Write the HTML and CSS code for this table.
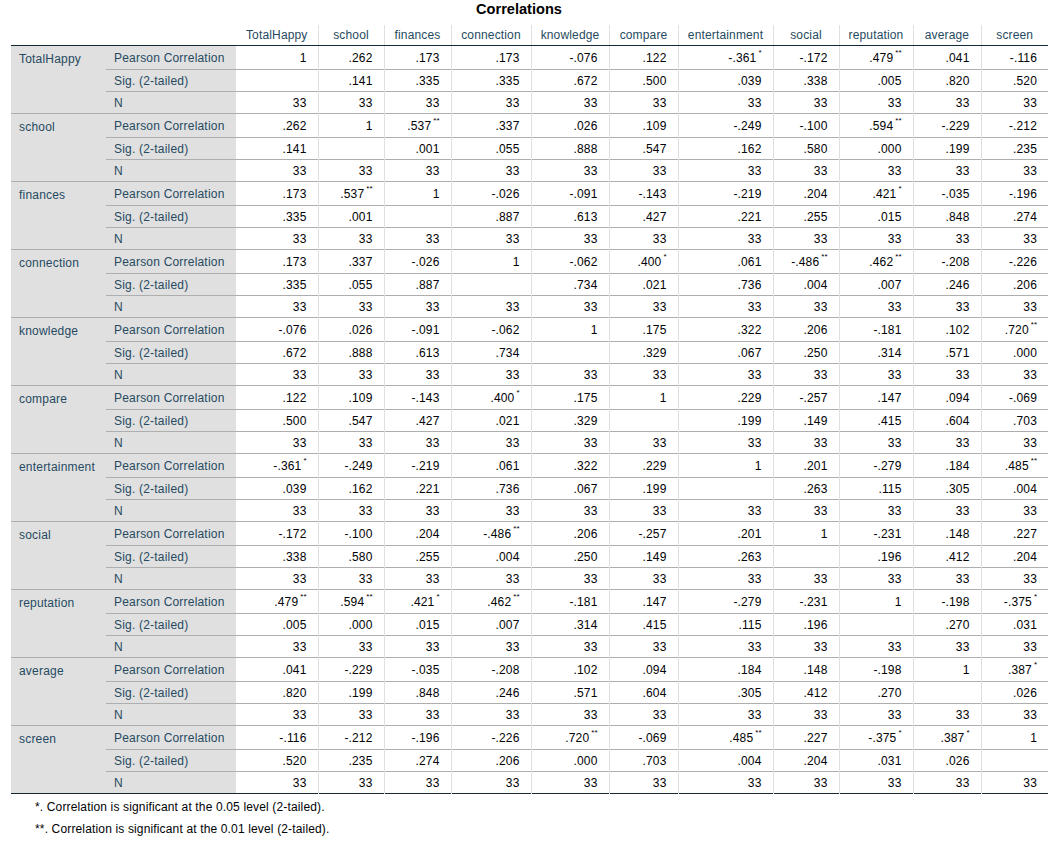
FILE: index.html
```html
<!DOCTYPE html>
<html lang="en">
<head>
<meta charset="utf-8">
<title>Correlations</title>
<link rel="stylesheet" href="styles.css">
</head>
<body>
<div class="page">
<table class="corr">
<caption class="title">Correlations</caption>
<colgroup>
<col class="c-var"><col class="c-stat">
<col style="width:82px"><col style="width:66px"><col style="width:67px"><col style="width:80px"><col style="width:78px"><col style="width:69px"><col style="width:95px"><col style="width:66px"><col style="width:74px"><col style="width:68px"><col style="width:67px">
</colgroup>
<thead>
<tr><th class="corner" colspan="2"></th><th class="first">TotalHappy</th><th>school</th><th>finances</th><th>connection</th><th>knowledge</th><th>compare</th><th>entertainment</th><th>social</th><th>reputation</th><th>average</th><th>screen</th></tr>
</thead>
<tbody>
<tr class="r-p"><th class="var" rowspan="3">TotalHappy</th><th class="stat">Pearson Correlation</th><td class="first">1</td><td>.262</td><td>.173</td><td>.173</td><td>-.076</td><td>.122</td><td>-.361<sup>*</sup></td><td>-.172</td><td>.479<sup>**</sup></td><td>.041</td><td>-.116</td></tr>
<tr class="r-s"><th class="stat">Sig. (2-tailed)</th><td class="first"></td><td>.141</td><td>.335</td><td>.335</td><td>.672</td><td>.500</td><td>.039</td><td>.338</td><td>.005</td><td>.820</td><td>.520</td></tr>
<tr class="r-n"><th class="stat">N</th><td class="first">33</td><td>33</td><td>33</td><td>33</td><td>33</td><td>33</td><td>33</td><td>33</td><td>33</td><td>33</td><td>33</td></tr>

<tr class="r-p"><th class="var" rowspan="3">school</th><th class="stat">Pearson Correlation</th><td class="first">.262</td><td>1</td><td>.537<sup>**</sup></td><td>.337</td><td>.026</td><td>.109</td><td>-.249</td><td>-.100</td><td>.594<sup>**</sup></td><td>-.229</td><td>-.212</td></tr>
<tr class="r-s"><th class="stat">Sig. (2-tailed)</th><td class="first">.141</td><td></td><td>.001</td><td>.055</td><td>.888</td><td>.547</td><td>.162</td><td>.580</td><td>.000</td><td>.199</td><td>.235</td></tr>
<tr class="r-n"><th class="stat">N</th><td class="first">33</td><td>33</td><td>33</td><td>33</td><td>33</td><td>33</td><td>33</td><td>33</td><td>33</td><td>33</td><td>33</td></tr>

<tr class="r-p"><th class="var" rowspan="3">finances</th><th class="stat">Pearson Correlation</th><td class="first">.173</td><td>.537<sup>**</sup></td><td>1</td><td>-.026</td><td>-.091</td><td>-.143</td><td>-.219</td><td>.204</td><td>.421<sup>*</sup></td><td>-.035</td><td>-.196</td></tr>
<tr class="r-s"><th class="stat">Sig. (2-tailed)</th><td class="first">.335</td><td>.001</td><td></td><td>.887</td><td>.613</td><td>.427</td><td>.221</td><td>.255</td><td>.015</td><td>.848</td><td>.274</td></tr>
<tr class="r-n"><th class="stat">N</th><td class="first">33</td><td>33</td><td>33</td><td>33</td><td>33</td><td>33</td><td>33</td><td>33</td><td>33</td><td>33</td><td>33</td></tr>

<tr class="r-p"><th class="var" rowspan="3">connection</th><th class="stat">Pearson Correlation</th><td class="first">.173</td><td>.337</td><td>-.026</td><td>1</td><td>-.062</td><td>.400<sup>*</sup></td><td>.061</td><td>-.486<sup>**</sup></td><td>.462<sup>**</sup></td><td>-.208</td><td>-.226</td></tr>
<tr class="r-s"><th class="stat">Sig. (2-tailed)</th><td class="first">.335</td><td>.055</td><td>.887</td><td></td><td>.734</td><td>.021</td><td>.736</td><td>.004</td><td>.007</td><td>.246</td><td>.206</td></tr>
<tr class="r-n"><th class="stat">N</th><td class="first">33</td><td>33</td><td>33</td><td>33</td><td>33</td><td>33</td><td>33</td><td>33</td><td>33</td><td>33</td><td>33</td></tr>

<tr class="r-p"><th class="var" rowspan="3">knowledge</th><th class="stat">Pearson Correlation</th><td class="first">-.076</td><td>.026</td><td>-.091</td><td>-.062</td><td>1</td><td>.175</td><td>.322</td><td>.206</td><td>-.181</td><td>.102</td><td>.720<sup>**</sup></td></tr>
<tr class="r-s"><th class="stat">Sig. (2-tailed)</th><td class="first">.672</td><td>.888</td><td>.613</td><td>.734</td><td></td><td>.329</td><td>.067</td><td>.250</td><td>.314</td><td>.571</td><td>.000</td></tr>
<tr class="r-n"><th class="stat">N</th><td class="first">33</td><td>33</td><td>33</td><td>33</td><td>33</td><td>33</td><td>33</td><td>33</td><td>33</td><td>33</td><td>33</td></tr>

<tr class="r-p"><th class="var" rowspan="3">compare</th><th class="stat">Pearson Correlation</th><td class="first">.122</td><td>.109</td><td>-.143</td><td>.400<sup>*</sup></td><td>.175</td><td>1</td><td>.229</td><td>-.257</td><td>.147</td><td>.094</td><td>-.069</td></tr>
<tr class="r-s"><th class="stat">Sig. (2-tailed)</th><td class="first">.500</td><td>.547</td><td>.427</td><td>.021</td><td>.329</td><td></td><td>.199</td><td>.149</td><td>.415</td><td>.604</td><td>.703</td></tr>
<tr class="r-n"><th class="stat">N</th><td class="first">33</td><td>33</td><td>33</td><td>33</td><td>33</td><td>33</td><td>33</td><td>33</td><td>33</td><td>33</td><td>33</td></tr>

<tr class="r-p"><th class="var" rowspan="3">entertainment</th><th class="stat">Pearson Correlation</th><td class="first">-.361<sup>*</sup></td><td>-.249</td><td>-.219</td><td>.061</td><td>.322</td><td>.229</td><td>1</td><td>.201</td><td>-.279</td><td>.184</td><td>.485<sup>**</sup></td></tr>
<tr class="r-s"><th class="stat">Sig. (2-tailed)</th><td class="first">.039</td><td>.162</td><td>.221</td><td>.736</td><td>.067</td><td>.199</td><td></td><td>.263</td><td>.115</td><td>.305</td><td>.004</td></tr>
<tr class="r-n"><th class="stat">N</th><td class="first">33</td><td>33</td><td>33</td><td>33</td><td>33</td><td>33</td><td>33</td><td>33</td><td>33</td><td>33</td><td>33</td></tr>

<tr class="r-p"><th class="var" rowspan="3">social</th><th class="stat">Pearson Correlation</th><td class="first">-.172</td><td>-.100</td><td>.204</td><td>-.486<sup>**</sup></td><td>.206</td><td>-.257</td><td>.201</td><td>1</td><td>-.231</td><td>.148</td><td>.227</td></tr>
<tr class="r-s"><th class="stat">Sig. (2-tailed)</th><td class="first">.338</td><td>.580</td><td>.255</td><td>.004</td><td>.250</td><td>.149</td><td>.263</td><td></td><td>.196</td><td>.412</td><td>.204</td></tr>
<tr class="r-n"><th class="stat">N</th><td class="first">33</td><td>33</td><td>33</td><td>33</td><td>33</td><td>33</td><td>33</td><td>33</td><td>33</td><td>33</td><td>33</td></tr>

<tr class="r-p"><th class="var" rowspan="3">reputation</th><th class="stat">Pearson Correlation</th><td class="first">.479<sup>**</sup></td><td>.594<sup>**</sup></td><td>.421<sup>*</sup></td><td>.462<sup>**</sup></td><td>-.181</td><td>.147</td><td>-.279</td><td>-.231</td><td>1</td><td>-.198</td><td>-.375<sup>*</sup></td></tr>
<tr class="r-s"><th class="stat">Sig. (2-tailed)</th><td class="first">.005</td><td>.000</td><td>.015</td><td>.007</td><td>.314</td><td>.415</td><td>.115</td><td>.196</td><td></td><td>.270</td><td>.031</td></tr>
<tr class="r-n"><th class="stat">N</th><td class="first">33</td><td>33</td><td>33</td><td>33</td><td>33</td><td>33</td><td>33</td><td>33</td><td>33</td><td>33</td><td>33</td></tr>

<tr class="r-p"><th class="var" rowspan="3">average</th><th class="stat">Pearson Correlation</th><td class="first">.041</td><td>-.229</td><td>-.035</td><td>-.208</td><td>.102</td><td>.094</td><td>.184</td><td>.148</td><td>-.198</td><td>1</td><td>.387<sup>*</sup></td></tr>
<tr class="r-s"><th class="stat">Sig. (2-tailed)</th><td class="first">.820</td><td>.199</td><td>.848</td><td>.246</td><td>.571</td><td>.604</td><td>.305</td><td>.412</td><td>.270</td><td></td><td>.026</td></tr>
<tr class="r-n"><th class="stat">N</th><td class="first">33</td><td>33</td><td>33</td><td>33</td><td>33</td><td>33</td><td>33</td><td>33</td><td>33</td><td>33</td><td>33</td></tr>

<tr class="r-p"><th class="var" rowspan="3">screen</th><th class="stat">Pearson Correlation</th><td class="first">-.116</td><td>-.212</td><td>-.196</td><td>-.226</td><td>.720<sup>**</sup></td><td>-.069</td><td>.485<sup>**</sup></td><td>.227</td><td>-.375<sup>*</sup></td><td>.387<sup>*</sup></td><td>1</td></tr>
<tr class="r-s"><th class="stat">Sig. (2-tailed)</th><td class="first">.520</td><td>.235</td><td>.274</td><td>.206</td><td>.000</td><td>.703</td><td>.004</td><td>.204</td><td>.031</td><td>.026</td><td></td></tr>
<tr class="r-n last"><th class="stat">N</th><td class="first">33</td><td>33</td><td>33</td><td>33</td><td>33</td><td>33</td><td>33</td><td>33</td><td>33</td><td>33</td><td>33</td></tr>
</tbody>
</table>
<div class="notes">
<p>*. Correlation is significant at the 0.05 level (2-tailed).</p>
<p>**. Correlation is significant at the 0.01 level (2-tailed).</p>
</div>
</div>
</body>
</html>
```
FILE: styles.css
```css
html, body {
  margin: 0;
  padding: 0;
  background: #ffffff;
}

body {
  font-family: "Liberation Sans", Arial, sans-serif;
  font-size: 12px;
  letter-spacing: 0.15px;
  color: #010205;
}

.page {
  padding-left: 11px;
}

.corr {
  border-collapse: collapse;
  table-layout: fixed;
  width: 1037px;
}

.c-var { width: 95px; }
.c-stat { width: 130px; }

.title {
  caption-side: top;
  font-size: 14.6px;
  font-weight: bold;
  letter-spacing: 0;
  color: #000000;
  line-height: 18px;
  text-align: center;
  padding: 0 21px 7px 0;
}

.corr thead th {
  height: 20px;
  padding: 0 2px;
  font-weight: normal;
  color: #264a60;
  text-align: center;
  vertical-align: middle;
  white-space: nowrap;
  border-bottom: 1px solid #152935;
  border-left: 1px solid #e0e0e0;
}

.corr thead th.corner,
.corr thead th.first {
  border-left: none;
}

.corr tbody tr { border-top: 1px solid #aeaeae; }
.corr tbody tr:first-child { border-top: none; }
.corr tbody tr.last { border-bottom: 1px solid #152935; }

.r-p { height: 24px; }
.r-s, .r-n { height: 22px; }

.corr tbody th {
  background: #e0e0e0;
  color: #264a60;
  font-weight: normal;
  text-align: left;
  padding: 1px 0 0 8px;
  letter-spacing: 0.2px;
  white-space: nowrap;
  vertical-align: middle;
}

.corr tbody th.var {
  vertical-align: top;
  padding-top: 6px;
}

.corr td {
  text-align: right;
  padding: 1px 11px 0 0;
  vertical-align: middle;
  white-space: nowrap;
  border-left: 1px solid #e0e0e0;
}

.corr td.first { border-left: none; }

.corr sup {
  font-size: 8px;
  line-height: 0;
  vertical-align: 7px;
  margin-left: 2px;
  letter-spacing: 0;
}

.notes {
  padding: 2px 0 0 24px;
}

.notes p {
  margin: 0;
  line-height: 22px;
  color: #010205;
}
```
